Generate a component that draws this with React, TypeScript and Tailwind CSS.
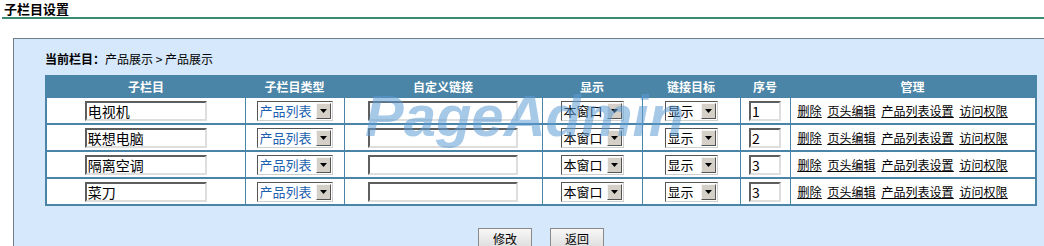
const rows = [
  { name: '电视机', order: '1' },
  { name: '联想电脑', order: '2' },
  { name: '隔离空调', order: '3' },
  { name: '菜刀', order: '3' },
]

const font = { fontFamily: '"Noto Sans CJK SC", "Noto Sans", sans-serif' }

function FakeSelect({ value, width, blue }: { value: string; width: string; blue?: boolean }) {
  return (
    <div
      className={`inline-flex h-[20px] items-stretch border border-t-[#555] border-l-[#555] border-r-[#cfcfcf] border-b-[#cfcfcf] bg-white align-middle ${width}`}
    >
      <span
        className={`flex flex-1 items-center pl-[2px] text-[13px] leading-none ${blue ? 'text-[#1d5fae]' : 'text-black'}`}
      >
        {value}
      </span>
      <span className="my-[1px] mr-[1px] flex w-[15px] items-center justify-center border border-t-[#f4f4f4] border-l-[#f4f4f4] border-r-[#555] border-b-[#555] bg-[#d4d0c8]">
        <svg width="7" height="4" viewBox="0 0 7 4">
          <path d="M0 0h7L3.5 4z" fill="#000" />
        </svg>
      </span>
    </div>
  )
}

function Field({ value, width }: { value: string; width: string }) {
  return (
    <input
      readOnly
      defaultValue={value}
      className={`h-[20px] border-2 border-t-[#5e5e5e] border-l-[#5e5e5e] border-r-[#dedede] border-b-[#dedede] bg-white px-[1px] align-middle text-[14px] leading-none text-black outline-none ${width}`}
    />
  )
}

export default function App() {
  return (
    <div className="relative h-[246px] w-[1044px] overflow-hidden bg-white text-black" style={font}>
      <div className="px-[4px] pt-[1px] text-[13px] font-bold leading-[15px]">子栏目设置</div>
      <div className="ml-[2px] mt-[1px] h-[2px] bg-[#3b8a72]" />

      <div className="ml-[13px] mt-[19px] w-[1060px] border-l border-t border-[#6f7d8a] bg-[#d6e8fb] pb-10 pl-[31px] pt-[13px]">
        <div className="flex h-[14px] items-center text-[12px] leading-none">
          <span className="font-bold">当前栏目：</span>
          <span>产品展示 &gt; 产品展示</span>
        </div>

        <div className="relative mt-[9px] w-[992px]">
          <table className="w-full table-fixed border-collapse border-2 border-[#4a84a6] bg-white text-[12px]">
            <colgroup>
              <col className="w-[199px]" />
              <col className="w-[99px]" />
              <col className="w-[198px]" />
              <col className="w-[100px]" />
              <col className="w-[98px]" />
              <col className="w-[50px]" />
              <col />
            </colgroup>
            <thead>
              <tr className="h-[21px] bg-[#4a84a6] font-bold text-white">
                <th>子栏目</th>
                <th>子栏目类型</th>
                <th>自定义链接</th>
                <th>显示</th>
                <th>链接目标</th>
                <th>序号</th>
                <th>管理</th>
              </tr>
            </thead>
            <tbody>
              {rows.map((r, i) => (
                <tr key={i} className="h-[27px] border-t-2 border-[#4a84a6]">
                  <td className="border-x border-[#4a84a6] text-center">
                    <Field value={r.name} width="w-[122px]" />
                  </td>
                  <td className="border-x border-[#4a84a6] text-center">
                    <FakeSelect value="产品列表" width="w-[76px]" blue />
                  </td>
                  <td className="border-x border-[#4a84a6] text-center">
                    <Field value="" width="w-[150px]" />
                  </td>
                  <td className="border-x border-[#4a84a6] text-center">
                    <FakeSelect value="本窗口" width="w-[63px]" />
                  </td>
                  <td className="border-x border-[#4a84a6] text-center">
                    <FakeSelect value="显示" width="w-[53px]" />
                  </td>
                  <td className="border-x border-[#4a84a6] text-center">
                    <Field value={r.order} width="w-[32px]" />
                  </td>
                  <td className="border-x border-[#4a84a6] pl-[7px]">
                    <div className="flex gap-[6px] text-[12px] underline">
                      <a>删除</a>
                      <a>页头编辑</a>
                      <a>产品列表设置</a>
                      <a>访问权限</a>
                    </div>
                  </td>
                </tr>
              ))}
            </tbody>
          </table>

          <div
            className="pointer-events-none absolute left-[320px] top-[12px] text-[58px] font-bold italic leading-none text-[#5f9dd6]/55"
            style={{ fontFamily: '"Liberation Sans", Arial, sans-serif' }}
          >
            PageAdmin
          </div>
        </div>

        <div className="mt-[22px] flex gap-[18px] pl-[433px]">
          <button className="h-[22px] w-[54px] border border-[#8a8a8a] bg-gradient-to-b from-[#f7f7f7] to-[#dcdcdc] text-[12px]">
            修改
          </button>
          <button className="h-[22px] w-[54px] border border-[#8a8a8a] bg-gradient-to-b from-[#f7f7f7] to-[#dcdcdc] text-[12px]">
            返回
          </button>
        </div>
      </div>
    </div>
  )
}
